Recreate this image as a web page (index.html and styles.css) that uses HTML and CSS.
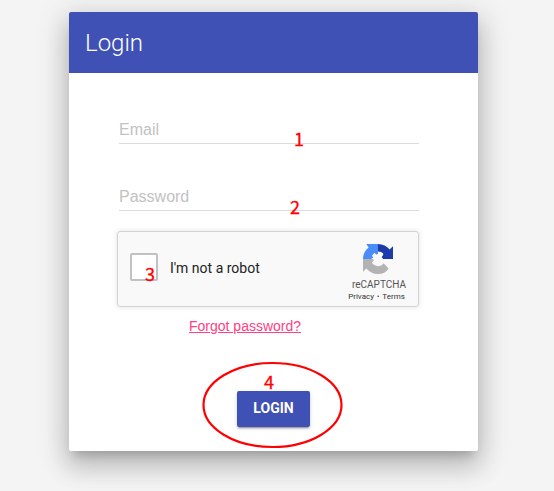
FILE: index.html
```html
<!DOCTYPE html>
<html lang="en">
<head>
<meta charset="utf-8">
<title>Login</title>
<link rel="stylesheet" href="styles.css">
</head>
<body>
<main class="card">
  <header class="card-title">Login</header>
  <form class="card-body">
    <div class="field">Email</div>
    <div class="field">Password</div>
    <div class="captcha">
      <span class="check"></span>
      <span class="captcha-label">I'm not a robot</span>
      <div class="brand">
        <svg class="logo" viewBox="0 0 64 64">
          <path fill="#1c3aa9" d="M64 32V4.600l-7.200 7.200C50.900 4.600 42 0 32 0v16c3 0 6 .7 8.500 2.200 1.500.8 2.500 2 3 3.500L36 32z"/>
          <path fill="#4a8df8" d="M32 0H7l5 7.200C4.600 13 0 22 0 32h17l5-3-3-4 5-6 5 4 3-2z"/>
          <path fill="#b3b3b3" d="M0 32v27.400l7.200-7.200C13 59.400 22 64 32 64c10.400 0 17.700-4 22.500-11.800L44 41c-3 4-7 6.600-12 6.600-5.500-.4-10.600-3.400-13.100-7.400L25 32z"/>
          <path fill="#f9f9f9" d="m24 19 6 5 5-7 8 5-3 6 4 5-7 6-6-5-5 3-5-5 5-4-5-5z"/>
        </svg>
        <div class="brand-name">reCAPTCHA</div>
        <div class="brand-links">Privacy<span class="dot">•</span>Terms</div>
      </div>
    </div>
    <a class="forgot">Forgot password?</a>
    <button class="submit" type="button">LOGIN</button>
  </form>
</main>
<span class="mark mark-1">1</span>
<span class="mark mark-2">2</span>
<span class="mark mark-3">3</span>
<span class="mark mark-4">4</span>
<svg class="ring" viewBox="0 0 142 88"><ellipse cx="70.500" cy="44" rx="69" ry="42"/></svg>
</body>
</html>
```
FILE: styles.css
```css
* { box-sizing: border-box; }
body {
  margin: 0;
  height: 491px;
  padding: 12px 0 0 69px;
  overflow: hidden;
  position: relative;
  background: #f4f4f4;
  font-family: Roboto, sans-serif;
}
.card {
  width: 409px;
  height: 439px;
  background: #fff;
  border-radius: 2px;
  box-shadow: 0 16px 24px 2px rgba(0,0,0,.14), 0 6px 30px 5px rgba(0,0,0,.13), 0 8px 10px -5px rgba(0,0,0,.2);
}
.card-title {
  height: 61px;
  padding: 1px 0 0 16px;
  border-radius: 2px 2px 0 0;
  background: #3f51b5;
  color: #fff;
  font-size: 24px;
  font-weight: 300;
  line-height: 61px;
}
.card-body {
  display: flex;
  flex-direction: column;
  align-items: flex-start;
  padding: 44px 0 0 48px;
}
.field {
  width: 300px;
  height: 27px;
  margin: 0 0 40px 2px;
  border-bottom: 1px solid #dcdcdc;
  color: #c2c2c2;
  font: 16px/26px "Liberation Sans", sans-serif;
}
.captcha {
  display: flex;
  align-items: center;
  width: 302px;
  height: 76px;
  margin-top: -20px;
  padding: 0 12px;
  border: 1px solid #d3d3d3;
  border-radius: 3px;
  background: #f9f9f9;
  box-shadow: 0 0 4px 1px rgba(0,0,0,.08);
}
.check {
  width: 28px;
  height: 28px;
  margin-top: -4px;
  border: 2px solid #c1c1c1;
  border-radius: 2px;
  background: #fff;
}
.captcha-label {
  margin: -2px 0 0 12px;
  font-size: 14px;
  color: #222;
}
.brand {
  width: 64px;
  margin: 7px -5px 0 auto;
  text-align: center;
  color: #555;
}
.logo { display: block; width: 30px; height: 30px; margin: 0 auto 0 16px; }
.brand-name { margin-top: 4px; font-size: 10px; line-height: 14px; }
.brand-links {
  margin: 0 0 0 -5px;
  font: 8px/10px Roboto, sans-serif;
  color: #333;
  white-space: nowrap;
}
.dot { margin: 0 3px; font-size: 7px; }
.forgot {
  margin: 10px 0 0 72px;
  color: #ff4081;
  font: 14px/18px "Liberation Sans", sans-serif;
  text-decoration: underline;
}
.submit {
  width: 73px;
  height: 36px;
  margin: 56px 0 0 120px;
  padding: 0 0 2px;
  border: 0;
  border-radius: 2px;
  background: #3f51b5;
  color: #fff;
  font: 700 14px/34px Roboto, sans-serif;
  box-shadow: 0 2px 2px rgba(0,0,0,.14), 0 3px 1px -2px rgba(0,0,0,.2), 0 1px 5px rgba(0,0,0,.12);
}
.mark {
  position: absolute;
  color: #f00;
  font: 18px/20px "Noto Sans CJK SC", sans-serif;
  -webkit-text-stroke: .3px #f00;
}
.mark-1 { left: 294px; top: 128px; }
.mark-2 { left: 290px; top: 196px; }
.mark-3 { left: 145px; top: 263px; }
.mark-4 { left: 264px; top: 371px; }
.ring {
  position: absolute;
  left: 202px;
  top: 361px;
  width: 142px;
  height: 88px;
  fill: none;
  stroke: #f00;
  stroke-width: 2.2;
}
```
